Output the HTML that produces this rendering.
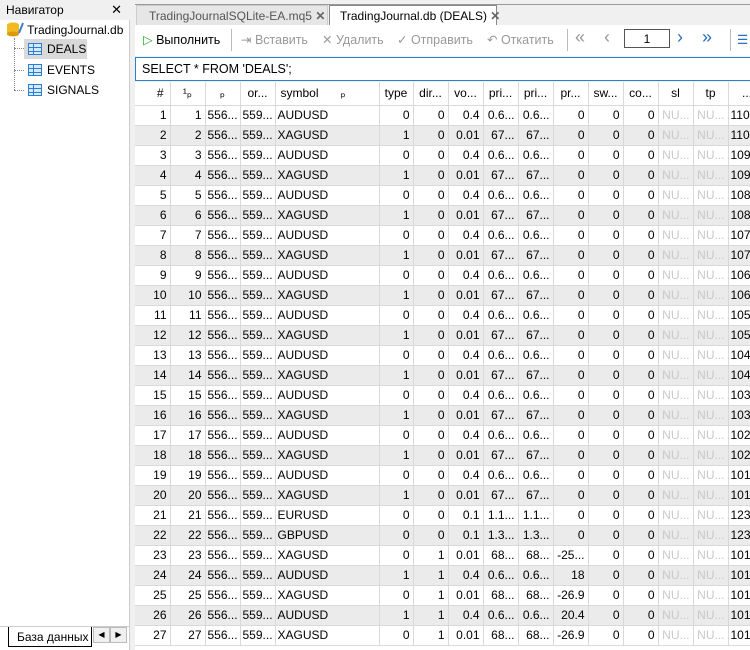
<!DOCTYPE html><html><head><meta charset="utf-8"><style>
*{box-sizing:border-box;margin:0;padding:0}
body{width:750px;height:650px;overflow:hidden;background:#f0f0f0;font-family:"Liberation Sans",sans-serif;font-size:12px;color:#000;position:relative}
.left{position:absolute;left:0;top:0;width:130px;height:650px;background:#fff;border-right:1px solid #ccc}
.navh{position:absolute;left:0;top:0;width:130px;height:20px;background:#f0f0f0;padding:3px 0 0 6px}
.navh span{position:absolute;right:8px;top:2px;font-size:13px}
.it{position:absolute;white-space:nowrap;height:19px;line-height:19px}
.tbl{display:inline-block;width:14px;height:12px;border:1px solid #2a7fd0;background:#d6eaff;vertical-align:-2px;margin-right:5px;background-image:linear-gradient(#2a7fd0,#2a7fd0),linear-gradient(#2a7fd0,#2a7fd0),linear-gradient(#2a7fd0,#2a7fd0);background-size:100% 1px,100% 1px,1px 100%;background-position:0 3px,0 7px,4px 0;background-repeat:no-repeat}
.dots{position:absolute;border-left:1px dotted #888}
.btab{position:absolute;left:8px;top:627px;width:84px;height:20px;background:#fff;border:1px solid #000;border-top:none;padding:3px 0 0 8px}
.arr{position:absolute;top:627px;width:17px;height:16px;border:1px solid #bbb;background:#f0f0f0;font-size:8px;text-align:center;line-height:14px}
.tab{position:absolute;top:5px;height:20px;padding:3px 6px 0 12px;color:#555;font-size:12px;white-space:nowrap}
.tabs{position:absolute;left:135px;top:4px;width:615px;height:1px;background:#999}
.bar{position:absolute;left:135px;top:25px;width:615px;height:31px;background:#fff}
.b{position:absolute;top:7px;color:#999;font-size:12.5px;white-space:nowrap}
.sql{position:absolute;left:135px;top:57px;width:615px;height:24px;background:#fff;border:1px solid #2a7fd0;border-right:none;padding:4px 0 0 6px;font-size:12.5px}
.grid{position:absolute;left:135px;top:82px;width:615px;height:568px;background:#fff;overflow:hidden}
table{border-collapse:collapse;table-layout:fixed;width:631px}
td{height:20px;border-right:1px solid #d9d9d9;border-bottom:1px solid #d9d9d9;text-align:right;padding:0 3px 0 2px;white-space:nowrap;overflow:hidden;font-size:12px}
tr:nth-child(odd) td{background:#ebebeb}
tr.h td{background:#fff;height:23px;text-align:center;padding:0}
td.s{text-align:left}
td.n{color:#c8c8c8}
</style></head><body>
<div class="left">
<div class="navh">Навигатор<span>✕</span></div>
<div class="it" style="left:6px;top:21px"><svg width="18" height="16" style="vertical-align:-3px"><ellipse cx="7" cy="4" rx="6" ry="2.5" fill="#f2b920"/><rect x="1" y="4" width="12" height="9" fill="#f2b920"/><ellipse cx="7" cy="13" rx="6" ry="2.5" fill="#d99a10"/><path d="M13 12 L17 2" stroke="#3a7fd0" stroke-width="2"/></svg> TradingJournal.db</div>
<div class="dots" style="left:14px;top:38px;height:52px"></div>
<div style="position:absolute;left:14px;top:48px;width:10px;border-top:1px dotted #888"></div>
<div style="position:absolute;left:14px;top:70px;width:10px;border-top:1px dotted #888"></div>
<div style="position:absolute;left:14px;top:90px;width:10px;border-top:1px dotted #888"></div>
<div style="position:absolute;left:24px;top:39px;width:63px;height:20px;background:#d9d9d9"></div>
<div class="it" style="left:28px;top:40px"><span class="tbl"></span>DEALS</div>
<div class="it" style="left:28px;top:61px"><span class="tbl"></span>EVENTS</div>
<div class="it" style="left:28px;top:81px"><span class="tbl"></span>SIGNALS</div>
<div style="position:absolute;left:0;top:626px;width:130px;height:1px;background:#ccc"></div>
<div class="btab">База данных</div>
<div class="arr" style="left:93px">◀</div><div class="arr" style="left:110px">▶</div>
</div>
<div class="tabs"></div>
<div class="tab" style="left:136px;width:192px;background:#e6e6e6;border:1px solid #ccc;border-bottom:none">TradingJournalSQLite-EA.mq5 <b style="color:#666">✕</b></div>
<div class="tab" style="left:329px;width:168px;background:#fff;color:#000;border:1px solid #888;border-bottom:none;height:21px;padding-left:10px">TradingJournal.db (DEALS) <b style="color:#666">✕</b></div>
<div class="bar">
<div class="b" style="left:8px;color:#000"><span style="color:#2a2">▷</span> Выполнить</div>
<div style="position:absolute;left:96px;top:4px;height:22px;border-left:1px solid #bbb"></div>
<div class="b" style="left:106px">⇥ Вставить</div>
<div class="b" style="left:187px">✕ Удалить</div>
<div class="b" style="left:262px">✓ Отправить</div>
<div class="b" style="left:352px">↶ Откатить</div>
<div style="position:absolute;left:432px;top:4px;height:22px;border-left:1px solid #bbb"></div>
<div class="b" style="left:440px;font-size:18px;top:2px">«</div>
<div class="b" style="left:469px;font-size:18px;top:2px">‹</div>
<div style="position:absolute;left:489px;top:4px;width:46px;height:19px;border:1px solid #555;text-align:center;padding-top:2px">1</div>
<div class="b" style="left:542px;font-size:18px;top:2px;color:#2a6fc0">›</div>
<div class="b" style="left:567px;font-size:18px;top:2px;color:#2a6fc0">»</div>
<div style="position:absolute;left:595px;top:4px;height:22px;border-left:1px solid #bbb"></div>
<div class="b" style="left:602px;color:#2a6fc0">☰</div>
</div>
<div class="sql">SELECT * FROM 'DEALS';</div>
<div class="grid"><table>
<colgroup><col style="width:35px"><col style="width:35px"><col style="width:35px"><col style="width:35px"><col style="width:104px"><col style="width:34px"><col style="width:35px"><col style="width:35px"><col style="width:35px"><col style="width:35px"><col style="width:35px"><col style="width:35px"><col style="width:35px"><col style="width:35px"><col style="width:35px"><col style="width:38px"></colgroup>
<tr class="h"><td style="text-align:right;padding-right:6px">#</td><td>¹ₚ</td><td>ₚ</td><td>or...</td><td style="text-align:left;padding-left:5px">symbol<span style="margin-left:22px">ₚ</span></td><td>type</td><td>dir...</td><td>vo...</td><td>pri...</td><td>pri...</td><td>pr...</td><td>sw...</td><td>co...</td><td>sl</td><td>tp</td><td>...</td></tr>
<tr><td>1</td><td>1</td><td>556...</td><td>559...</td><td class="s">AUDUSD</td><td>0</td><td>0</td><td>0.4</td><td>0.6...</td><td>0.6...</td><td>0</td><td>0</td><td>0</td><td class="n">NU...</td><td class="n">NU...</td><td class="s">110</td></tr>
<tr><td>2</td><td>2</td><td>556...</td><td>559...</td><td class="s">XAGUSD</td><td>1</td><td>0</td><td>0.01</td><td>67...</td><td>67...</td><td>0</td><td>0</td><td>0</td><td class="n">NU...</td><td class="n">NU...</td><td class="s">110</td></tr>
<tr><td>3</td><td>3</td><td>556...</td><td>559...</td><td class="s">AUDUSD</td><td>0</td><td>0</td><td>0.4</td><td>0.6...</td><td>0.6...</td><td>0</td><td>0</td><td>0</td><td class="n">NU...</td><td class="n">NU...</td><td class="s">109</td></tr>
<tr><td>4</td><td>4</td><td>556...</td><td>559...</td><td class="s">XAGUSD</td><td>1</td><td>0</td><td>0.01</td><td>67...</td><td>67...</td><td>0</td><td>0</td><td>0</td><td class="n">NU...</td><td class="n">NU...</td><td class="s">109</td></tr>
<tr><td>5</td><td>5</td><td>556...</td><td>559...</td><td class="s">AUDUSD</td><td>0</td><td>0</td><td>0.4</td><td>0.6...</td><td>0.6...</td><td>0</td><td>0</td><td>0</td><td class="n">NU...</td><td class="n">NU...</td><td class="s">108</td></tr>
<tr><td>6</td><td>6</td><td>556...</td><td>559...</td><td class="s">XAGUSD</td><td>1</td><td>0</td><td>0.01</td><td>67...</td><td>67...</td><td>0</td><td>0</td><td>0</td><td class="n">NU...</td><td class="n">NU...</td><td class="s">108</td></tr>
<tr><td>7</td><td>7</td><td>556...</td><td>559...</td><td class="s">AUDUSD</td><td>0</td><td>0</td><td>0.4</td><td>0.6...</td><td>0.6...</td><td>0</td><td>0</td><td>0</td><td class="n">NU...</td><td class="n">NU...</td><td class="s">107</td></tr>
<tr><td>8</td><td>8</td><td>556...</td><td>559...</td><td class="s">XAGUSD</td><td>1</td><td>0</td><td>0.01</td><td>67...</td><td>67...</td><td>0</td><td>0</td><td>0</td><td class="n">NU...</td><td class="n">NU...</td><td class="s">107</td></tr>
<tr><td>9</td><td>9</td><td>556...</td><td>559...</td><td class="s">AUDUSD</td><td>0</td><td>0</td><td>0.4</td><td>0.6...</td><td>0.6...</td><td>0</td><td>0</td><td>0</td><td class="n">NU...</td><td class="n">NU...</td><td class="s">106</td></tr>
<tr><td>10</td><td>10</td><td>556...</td><td>559...</td><td class="s">XAGUSD</td><td>1</td><td>0</td><td>0.01</td><td>67...</td><td>67...</td><td>0</td><td>0</td><td>0</td><td class="n">NU...</td><td class="n">NU...</td><td class="s">106</td></tr>
<tr><td>11</td><td>11</td><td>556...</td><td>559...</td><td class="s">AUDUSD</td><td>0</td><td>0</td><td>0.4</td><td>0.6...</td><td>0.6...</td><td>0</td><td>0</td><td>0</td><td class="n">NU...</td><td class="n">NU...</td><td class="s">105</td></tr>
<tr><td>12</td><td>12</td><td>556...</td><td>559...</td><td class="s">XAGUSD</td><td>1</td><td>0</td><td>0.01</td><td>67...</td><td>67...</td><td>0</td><td>0</td><td>0</td><td class="n">NU...</td><td class="n">NU...</td><td class="s">105</td></tr>
<tr><td>13</td><td>13</td><td>556...</td><td>559...</td><td class="s">AUDUSD</td><td>0</td><td>0</td><td>0.4</td><td>0.6...</td><td>0.6...</td><td>0</td><td>0</td><td>0</td><td class="n">NU...</td><td class="n">NU...</td><td class="s">104</td></tr>
<tr><td>14</td><td>14</td><td>556...</td><td>559...</td><td class="s">XAGUSD</td><td>1</td><td>0</td><td>0.01</td><td>67...</td><td>67...</td><td>0</td><td>0</td><td>0</td><td class="n">NU...</td><td class="n">NU...</td><td class="s">104</td></tr>
<tr><td>15</td><td>15</td><td>556...</td><td>559...</td><td class="s">AUDUSD</td><td>0</td><td>0</td><td>0.4</td><td>0.6...</td><td>0.6...</td><td>0</td><td>0</td><td>0</td><td class="n">NU...</td><td class="n">NU...</td><td class="s">103</td></tr>
<tr><td>16</td><td>16</td><td>556...</td><td>559...</td><td class="s">XAGUSD</td><td>1</td><td>0</td><td>0.01</td><td>67...</td><td>67...</td><td>0</td><td>0</td><td>0</td><td class="n">NU...</td><td class="n">NU...</td><td class="s">103</td></tr>
<tr><td>17</td><td>17</td><td>556...</td><td>559...</td><td class="s">AUDUSD</td><td>0</td><td>0</td><td>0.4</td><td>0.6...</td><td>0.6...</td><td>0</td><td>0</td><td>0</td><td class="n">NU...</td><td class="n">NU...</td><td class="s">102</td></tr>
<tr><td>18</td><td>18</td><td>556...</td><td>559...</td><td class="s">XAGUSD</td><td>1</td><td>0</td><td>0.01</td><td>67...</td><td>67...</td><td>0</td><td>0</td><td>0</td><td class="n">NU...</td><td class="n">NU...</td><td class="s">102</td></tr>
<tr><td>19</td><td>19</td><td>556...</td><td>559...</td><td class="s">AUDUSD</td><td>0</td><td>0</td><td>0.4</td><td>0.6...</td><td>0.6...</td><td>0</td><td>0</td><td>0</td><td class="n">NU...</td><td class="n">NU...</td><td class="s">101</td></tr>
<tr><td>20</td><td>20</td><td>556...</td><td>559...</td><td class="s">XAGUSD</td><td>1</td><td>0</td><td>0.01</td><td>67...</td><td>67...</td><td>0</td><td>0</td><td>0</td><td class="n">NU...</td><td class="n">NU...</td><td class="s">101</td></tr>
<tr><td>21</td><td>21</td><td>556...</td><td>559...</td><td class="s">EURUSD</td><td>0</td><td>0</td><td>0.1</td><td>1.1...</td><td>1.1...</td><td>0</td><td>0</td><td>0</td><td class="n">NU...</td><td class="n">NU...</td><td class="s">123</td></tr>
<tr><td>22</td><td>22</td><td>556...</td><td>559...</td><td class="s">GBPUSD</td><td>0</td><td>0</td><td>0.1</td><td>1.3...</td><td>1.3...</td><td>0</td><td>0</td><td>0</td><td class="n">NU...</td><td class="n">NU...</td><td class="s">123</td></tr>
<tr><td>23</td><td>23</td><td>556...</td><td>559...</td><td class="s">XAGUSD</td><td>0</td><td>1</td><td>0.01</td><td>68...</td><td>68...</td><td>-25...</td><td>0</td><td>0</td><td class="n">NU...</td><td class="n">NU...</td><td class="s">101</td></tr>
<tr><td>24</td><td>24</td><td>556...</td><td>559...</td><td class="s">AUDUSD</td><td>1</td><td>1</td><td>0.4</td><td>0.6...</td><td>0.6...</td><td>18</td><td>0</td><td>0</td><td class="n">NU...</td><td class="n">NU...</td><td class="s">101</td></tr>
<tr><td>25</td><td>25</td><td>556...</td><td>559...</td><td class="s">XAGUSD</td><td>0</td><td>1</td><td>0.01</td><td>68...</td><td>68...</td><td>-26.9</td><td>0</td><td>0</td><td class="n">NU...</td><td class="n">NU...</td><td class="s">101</td></tr>
<tr><td>26</td><td>26</td><td>556...</td><td>559...</td><td class="s">AUDUSD</td><td>1</td><td>1</td><td>0.4</td><td>0.6...</td><td>0.6...</td><td>20.4</td><td>0</td><td>0</td><td class="n">NU...</td><td class="n">NU...</td><td class="s">101</td></tr>
<tr><td>27</td><td>27</td><td>556...</td><td>559...</td><td class="s">XAGUSD</td><td>0</td><td>1</td><td>0.01</td><td>68...</td><td>68...</td><td>-26.9</td><td>0</td><td>0</td><td class="n">NU...</td><td class="n">NU...</td><td class="s">101</td></tr>
</table></div>
</body></html>
